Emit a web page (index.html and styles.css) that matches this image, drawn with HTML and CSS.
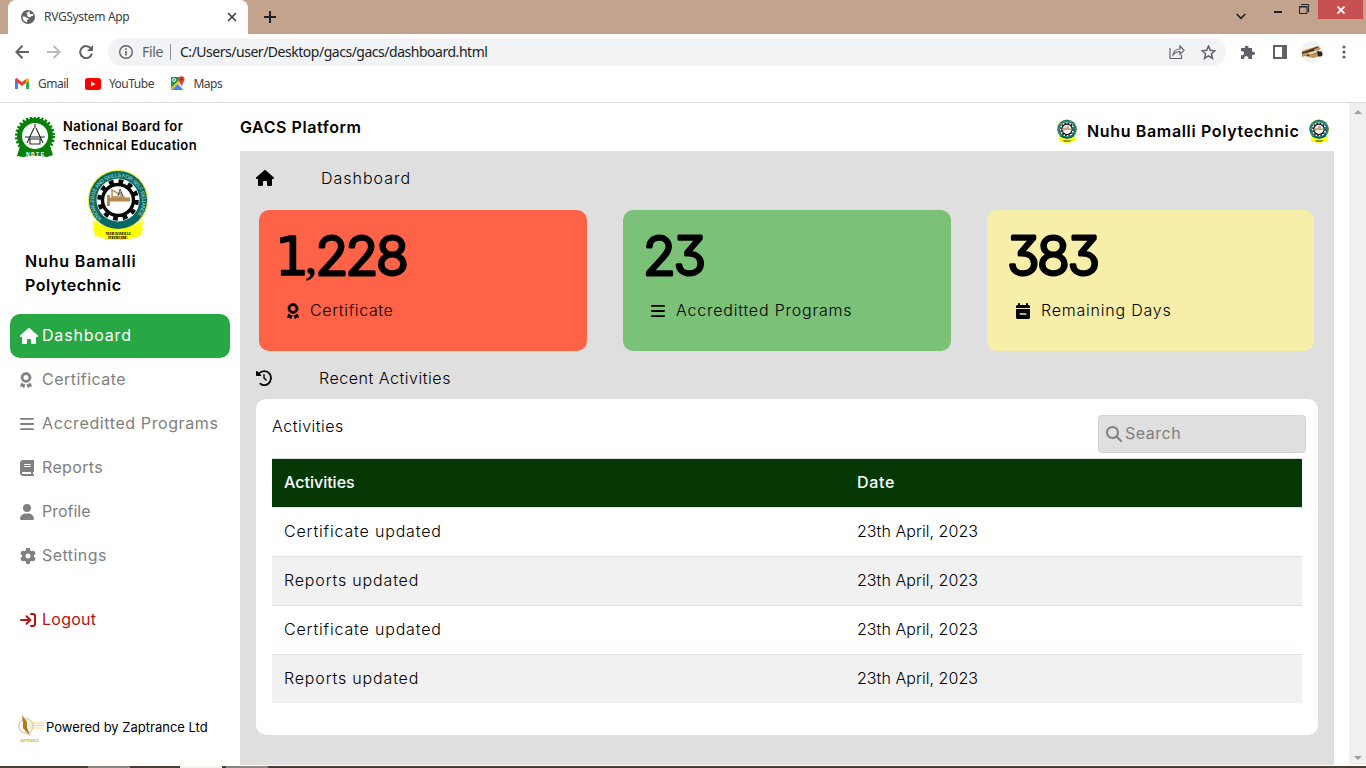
FILE: index.html
```html
<!DOCTYPE html>
<html lang="en">
<head>
<meta charset="utf-8">
<title>RVGSystem App</title>
<link rel="stylesheet" href="styles.css">
</head>
<body>
<svg class="sprite" aria-hidden="true">
  <symbol id="house" viewBox="0 0 576 512"><path d="M575.8 255.5c0 18-15 32.1-32 32.1h-32l.7 160.2c0 2.7-.2 5.4-.5 8.1V472c0 22.1-17.9 40-40 40H392c-22.1 0-40-17.9-40-40V384c0-17.7-14.3-32-32-32H256c-17.7 0-32 14.3-32 32v88c0 22.1-17.9 40-40 40H104c-22.1 0-40-17.9-40-40V287.6H32c-18 0-32-14-32-32.1c0-9 3-17 10-24L266.4 8c7-7 15-8 22-8s15 2 21 7L564.8 231.5c8 7 12 15 11 24z"/></symbol>
  <symbol id="award" viewBox="0 0 384 512"><g fill="none" stroke="currentColor"><circle cx="192" cy="176" r="120" stroke-width="78"/><circle cx="192" cy="176" r="162" stroke-width="28" stroke-dasharray="42 21.6"/></g><path d="M48 336L4 448c-4 12 5 22 17 21l52-2 37 39c8 9 22 7 27-5l41-104c-50-2-90-25-130-61zM336 336l44 112c4 12-5 22-17 21l-52-2-37 39c-8 9-22 7-27-5l-41-104c50-2 90-25 130-61z"/></symbol>
  <symbol id="bars" viewBox="0 0 448 512"><rect y="64" width="448" height="58" rx="26"/><rect y="227" width="448" height="58" rx="26"/><rect y="390" width="448" height="58" rx="26"/></symbol>
  <symbol id="book" viewBox="0 0 448 512"><path fill-rule="evenodd" d="M96 0C43 0 0 43 0 96V416c0 53 43 96 96 96H416c17.7 0 32-14.3 32-32s-14.3-32-32-32V384c17.7 0 32-14.3 32-32V32c0-17.7-14.3-32-32-32H96zm0 384H352v64H96c-17.7 0-32-14.3-32-32s14.3-32 32-32zm32-240c0-8.8 7.2-16 16-16H336c8.8 0 16 7.2 16 16s-7.2 16-16 16H144c-8.8 0-16-7.2-16-16zm16 48H336c8.8 0 16 7.2 16 16s-7.2 16-16 16H144c-8.8 0-16-7.2-16-16s7.2-16 16-16z"/></symbol>
  <symbol id="user" viewBox="0 0 448 512"><path d="M224 256A128 128 0 1 0 224 0a128 128 0 1 0 0 256zm-45.7 48C79.8 304 0 383.8 0 482.3C0 498.7 13.3 512 29.7 512H418.3c16.4 0 29.7-13.3 29.7-29.7C448 383.8 368.2 304 269.7 304H178.3z"/></symbol>
  <symbol id="gear" viewBox="0 0 512 512"><path d="M495.9 166.6c3.2 8.7 .5 18.4-6.4 24.6l-43.3 39.4c1.1 8.3 1.7 16.8 1.7 25.4s-.6 17.1-1.7 25.4l43.3 39.4c6.9 6.2 9.6 15.9 6.4 24.6c-4.4 11.9-9.7 23.3-15.8 34.3l-4.7 8.1c-6.6 11-14 21.4-22.1 31.2c-5.9 7.2-15.7 9.6-24.5 6.8l-55.7-17.7c-13.4 10.3-28.2 18.9-44 25.4l-12.5 57.1c-2 9.1-9 16.3-18.2 17.8c-13.8 2.3-28 3.5-42.5 3.5s-28.7-1.2-42.5-3.5c-9.2-1.5-16.2-8.7-18.2-17.8l-12.5-57.1c-15.8-6.5-30.6-15.1-44-25.4L83.1 425.9c-8.8 2.8-18.6 .3-24.5-6.8c-8.1-9.8-15.5-20.2-22.1-31.2l-4.7-8.1c-6.1-11-11.4-22.4-15.8-34.3c-3.2-8.7-.5-18.4 6.4-24.6l43.3-39.4C64.6 273.1 64 264.6 64 256s.6-17.1 1.7-25.4L22.4 191.2c-6.9-6.2-9.6-15.9-6.4-24.6c4.4-11.9 9.7-23.3 15.8-34.3l4.7-8.1c6.6-11 14-21.4 22.1-31.2c5.9-7.2 15.7-9.6 24.5-6.8l55.7 17.7c13.4-10.3 28.2-18.9 44-25.4l12.5-57.1c2-9.1 9-16.3 18.2-17.8C227.3 1.2 241.5 0 256 0s28.7 1.2 42.5 3.5c9.2 1.5 16.2 8.7 18.2 17.8l12.5 57.1c15.8 6.5 30.6 15.1 44 25.4l55.7-17.7c8.8-2.8 18.6-.3 24.5 6.8c8.1 9.8 15.5 20.2 22.1 31.2l4.7 8.1c6.1 11 11.4 22.4 15.8 34.3zM256 336a80 80 0 1 0 0-160 80 80 0 1 0 0 160z"/></symbol>
  <symbol id="login" viewBox="0 0 512 512"><path fill="none" stroke="currentColor" stroke-width="64" stroke-linecap="round" stroke-linejoin="round" d="M32 256H330M210 136L330 256L210 376M352 64h64c35 0 64 29 64 64v256c0 35-29 64-64 64h-64"/></symbol>
  <symbol id="history" viewBox="0 0 512 512"><path fill="none" stroke="currentColor" stroke-width="60" stroke-linecap="round" stroke-linejoin="round" d="M96 110C190 10 350 10 432 112C505 215 490 350 400 430C325 492 215 495 140 442"/><path d="M0 56c0-24 28-32 42-18l118 118c15 15 4 36-14 36H24c-13 0-24-11-24-24z"/><path fill="none" stroke="currentColor" stroke-width="46" stroke-linecap="round" stroke-linejoin="round" d="M256 152v104l66 66"/></symbol>
  <symbol id="calendar" viewBox="0 0 448 512"><path fill-rule="evenodd" d="M96 0c18 0 32 14 32 32v32h192V32c0-42 64-42 64 0v32h16c27 0 48 21 48 48v48H0v-48c0-27 21-48 48-48h16V32C64 14 78 0 96 0zM0 192h448v272c0 27-21 48-48 48H48c-27 0-48-21-48-48zm136 136c-34 0-34 48 0 48h176c34 0 34-48 0-48z"/></symbol>
  <symbol id="search" viewBox="0 0 512 512"><path d="M416 208c0 45.9-14.9 88.3-40 122.7L502.6 457.4c12.5 12.5 12.5 32.8 0 45.3s-32.8 12.5-45.3 0L330.7 376c-34.4 25.2-76.8 40-122.7 40C93.1 416 0 322.9 0 208S93.1 0 208 0S416 93.1 416 208zM208 352a144 144 0 1 0 0-288 144 144 0 1 0 0 288z"/></symbol>
</svg>

<div class="tabs">
  <div class="tab">
    <svg class="globe" viewBox="0 0 14 14"><circle cx="7" cy="7" r="7" fill="#5f6368"/><path d="M1.500 6.500l3 .2 1.300 1.200 1.700.1v1.200L6 10.300v2C3.200 12 1.500 9.500 1.500 6.500zM5 3.500l2.500-2 1.500.3-.5 1.700 1.500.8 2.200-.6v2l-1.800.4-1 1.200-2-.3-1.600-1.500L7 4.200z" fill="#fff"/></svg>
    <span class="tab-title">RVGSystem App</span>
    <svg class="close" viewBox="0 0 10 10"><path d="M1 1l8 8M9 1L1 9" stroke="#3c4043" stroke-width="1.700"/></svg>
  </div>
  <svg class="plus" viewBox="0 0 12 12"><path d="M6 0v12M0 6h12" stroke="#202124" stroke-width="2"/></svg>
  <div class="window-buttons">
    <svg class="chevron" viewBox="0 0 10 7"><path d="M.7 1L5 5.300 9.300 1" fill="none" stroke="#202124" stroke-width="1.700"/></svg>
    <span class="minimize"></span>
    <svg class="restore" viewBox="0 0 10 10"><path d="M2 .5h7.500V8M.5 2.500H8v7H.5zM0 3h8" fill="none" stroke="#202124"/></svg>
    <span class="exit"><svg width="8" height="8" viewBox="0 0 8 8"><path d="M.5.5l7 7M7.500.5l-7 7" stroke="#fff" stroke-width="1.800"/></svg></span>
  </div>
</div>
<div class="toolbar">
  <svg class="arrow" viewBox="0 0 14 14"><path d="M14 7H1.500M7.500.8L1.300 7l6.200 6.200" fill="none" stroke="#5f6368" stroke-width="2"/></svg>
  <svg class="arrow" viewBox="0 0 14 14"><path d="M0 7h12.500M6.500.8L12.700 7l-6.200 6.200" fill="none" stroke="#b7b9bc" stroke-width="1.800"/></svg>
  <svg class="reload" viewBox="0 0 14 14"><path d="M12.300 4A6 6 0 1 0 13 8.500" fill="none" stroke="#5f6368" stroke-width="2"/><path d="M14 0v6H8z" fill="#5f6368"/></svg>
  <div class="address">
    <svg class="info" viewBox="0 0 14 14"><circle cx="7" cy="7" r="6.300" fill="none" stroke="#5f6368" stroke-width="1.400"/><path d="M7 6v4.500M7 3.300V5" stroke="#5f6368" stroke-width="1.600"/></svg>
    <span class="scheme">File</span><span class="rule"></span><span class="url">C:/Users/user/Desktop/gacs/gacs/dashboard.html</span>
    <svg class="share" viewBox="0 0 16 16"><path d="M1 4v10.500h11.500V11M4 11c.5-4 3-6 7-6V2l4 4.300-4 4V7.500C8 7.300 6 8.500 4 11z" fill="none" stroke="#5f6368" stroke-width="1.200"/></svg>
    <svg class="star" viewBox="0 0 14 14"><path d="M7 1l1.700 4 4.300.4-3.300 2.800 1 4.300L7 10.200 3.300 12.500l1-4.300L1 5.400 5.300 5z" fill="none" stroke="#5f6368" stroke-width="1.400"/></svg>
  </div>
  <svg class="puzzle" viewBox="0 0 15 15"><path d="M1 3h4C4 0 9 0 8.500 3H12v3.500c4-.5 4 4 0 3.500V14H8.500c0-4-4.500-4-4.500 0H1v-3.700c4 0 4-4.300 0-4.300z" fill="#5f6368"/></svg>
  <svg class="panel" viewBox="0 0 14 14"><path d="M1 1h12v12H1z" fill="none" stroke="#5f6368" stroke-width="2"/><path d="M9 1h4v12H9z" fill="#5f6368"/></svg>
  <svg class="avatar" viewBox="0 0 22 22"><circle cx="11" cy="11" r="11" fill="#f2f2f1"/><path d="M1 10l16-5 3 3-7 3 8-1-1 5-8 2-8-2-3 1z" fill="#bd935b"/><path d="M1 12l12-3M6 15l8-5 4 1M4 11l13-5" stroke="#45321f" stroke-width="1.300"/><path d="M8 13l8-3" stroke="#f3dab0" stroke-width="2"/><circle cx="19" cy="13" r="2.500" fill="#222528"/></svg>
  <svg class="menu" viewBox="0 0 4 14"><g fill="#5f6368"><circle cx="2" cy="2" r="1.600"/><circle cx="2" cy="7" r="1.600"/><circle cx="2" cy="12" r="1.600"/></g></svg>
</div>
<div class="bookmarks">
  <svg class="gmail" viewBox="0 0 14 11"><path d="M0 1v10h3V4z" fill="#4285f4"/><path d="M14 1v10h-3V4z" fill="#34a853"/><path d="M0 1.500L1.500 0 7 4l4-3v4L7 8 0 3z" fill="#ea4335"/><path d="M11 1c1.500-1.500 3-.5 3 1v1l-3 2z" fill="#fbbc04"/></svg><span>Gmail</span>
  <svg class="youtube" viewBox="0 0 16 12"><rect width="16" height="12" rx="2.500" fill="#f00"/><path d="M6 3.500v5L10.500 6z" fill="#fff"/></svg><span>YouTube</span>
  <svg class="maps" viewBox="0 0 15 15"><path d="M1 1h12v13H1z" fill="#e5e5e5"/><path d="M1 1h8v5L1 13z" fill="#1a9c55"/><path d="M1 13l6-6 6 7H1z" fill="#4285f4"/><path d="M1 12L9 4l1 2-8 8z" fill="#fbc52d"/><circle cx="4" cy="4" r="1.500" fill="none" stroke="#fff"/><path d="M11.500 10C10.500 7 8.500 5.500 8.500 3.200a3 3 0 0 1 6 0c0 2.300-2 3.800-3 6.800z" fill="#de4032"/><circle cx="11.500" cy="3.200" r="1" fill="#842020"/></svg><span>Maps</span>
</div>

<div class="page">
  <aside>
    <div class="board">
      <svg class="nbte" viewBox="0 0 40 41"><circle cx="20" cy="19" r="15.500" fill="#fff" stroke="#098009" stroke-width="5"/><circle cx="20" cy="19" r="18.500" fill="none" stroke="#098009" stroke-width="3" stroke-dasharray="2.200 1.675"/><path d="M5 29l4 3c7 3 15 3 22 0l4-3 3 9-6 2c-8-2-16-2-24 0l-6-1z" fill="#098009"/><path d="M20 7v4M19 11l-7 15M21 11l7 15M10 20h20M15 22h10v5H15z" fill="none" stroke="#252525" stroke-width="1.100"/><text class="nbte-text" x="20.700" y="38.500" text-anchor="middle" fill="#fff">NBTE</text></svg>
      <div class="board-name"><span>National Board for</span><br><span>Technical Education</span></div>
    </div>
    <svg class="school-seal" viewBox="0 0 60 70"><g id="seal">
      <circle cx="30" cy="30" r="30" fill="#e6ee20"/><circle cx="30" cy="30" r="29" fill="#066864"/>
      <circle cx="30" cy="30" r="21.500" fill="#fff"/>
      <circle cx="30" cy="30" r="18.800" fill="none" stroke="#080808" stroke-width="4" stroke-dasharray="4.800 5.043"/>
      <circle cx="30" cy="30" r="15.500" fill="#fff" stroke="#080808" stroke-width="3.400"/>
      <path id="sealArc" d="M13.500 48.500A24 24 0 1 1 46.500 48.500" fill="none"/>
      <text class="seal-text" fill="#b9dfdc"><textPath href="#sealArc" textLength="109">KNOWLEDGE AND SKILLS FOR SELF RELIANCE</textPath></text>
      <path d="M24 20v7h12z" fill="#fff" stroke="#b48a52" stroke-width="1.400"/><path d="M19 25h3v2.500h20v4H22V36h-3z" fill="#b48a52"/><path d="M30 26l2-7 3 7M31 23h3" fill="none" stroke="#222" stroke-width=".8"/>
      <path d="M5 50c15 12 35 12 50 0l-1 8 2 2-3 1 1 4c-16 7-32 7-48 0l1-4-3-1 2-2z" fill="#ffff00"/>
      <text class="seal-name" x="30" y="65" text-anchor="middle" textLength="25">NUHU BAMALLI</text><text class="seal-name" x="30" y="69" text-anchor="middle" textLength="20">POLYTECHNIC</text>
    </g></svg>
    <div class="school"><span class="nuhu">Nuhu Bamalli</span><br><span class="poly">Polytechnic</span></div>
    <nav>
      <div class="item active"><svg class="w18"><use href="#house"/></svg><span class="dash">Dashboard</span></div>
      <div class="item"><svg class="w12"><use href="#award"/></svg><span class="cert">Certificate</span></div>
      <div class="item"><svg class="w14"><use href="#bars"/></svg><span class="accr">Accreditted Programs</span></div>
      <div class="item"><svg class="w14"><use href="#book"/></svg><span class="rep">Reports</span></div>
      <div class="item"><svg class="w14"><use href="#user"/></svg><span class="prof">Profile</span></div>
      <div class="item"><svg class="w16"><use href="#gear"/></svg><span class="sett">Settings</span></div>
      <div class="item logout"><svg class="w16"><use href="#login"/></svg><span class="logo">Logout</span></div>
    </nav>
    <footer><svg class="zap" viewBox="0 0 28 30"><circle cx="8" cy="11" r="7.300" fill="none" stroke="#d9b98c" stroke-width="1"/><path d="M4 0l5 7v5l3 9-7-8V8z" fill="#b97812"/><path d="M11 8h15M11 10.500h15M11 13h14" stroke="#ead775"/><text class="zap-text" x="2" y="27" fill="#c9b350">ZAPTRANCE</text></svg><span>Powered by Zaptrance Ltd</span></footer>
  </aside>
  <main>
    <header><h1>GACS Platform</h1><div class="who"><svg viewBox="0 0 60 70"><use href="#seal"/></svg><b>Nuhu Bamalli Polytechnic</b><svg viewBox="0 0 60 70"><use href="#seal"/></svg></div></header>
    <section class="content">
      <div class="heading first"><svg class="w18"><use href="#house"/></svg><span class="dash">Dashboard</span></div>
      <div class="cards">
        <div class="card red"><svg class="number"><text class="one" x="-5" y="54.500">1</text><text class="comma" x="25.500" y="54">,</text><text x="35.500 65.500 96" y="54.500">228</text></svg><div class="label"><svg class="w12"><use href="#award"/></svg><span class="cert">Certificate</span></div></div>
        <div class="card green"><svg class="number"><text x="-1 29.500" y="54.500">23</text></svg><div class="label"><svg class="w14"><use href="#bars"/></svg><span class="accr">Accreditted Programs</span></div></div>
        <div class="card yellow"><svg class="number"><text x="-1 29 59.500" y="54.500">383</text></svg><div class="label"><svg class="w14"><use href="#calendar"/></svg><span class="rem">Remaining Days</span></div></div>
      </div>
      <div class="heading recent"><svg class="w16"><use href="#history"/></svg><span class="ract">Recent Activities</span></div>
      <div class="activity">
        <div class="activity-head"><span class="act">Activities</span><div class="search"><svg class="w16"><use href="#search"/></svg><span>Search</span></div></div>
        <table>
          <thead><tr><th>Activities</th><th>Date</th></tr></thead>
          <tbody>
            <tr><td class="upd">Certificate updated</td><td>23th April, 2023</td></tr>
            <tr><td class="upd">Reports updated</td><td>23th April, 2023</td></tr>
            <tr><td class="upd">Certificate updated</td><td>23th April, 2023</td></tr>
            <tr><td class="upd">Reports updated</td><td>23th April, 2023</td></tr>
          </tbody>
        </table>
      </div>
    </section>
  </main>
  <div class="scrollbar"><i class="up"></i><i class="down"></i></div>
</div>
<div class="taskbar"><i class="t1"></i><i class="t2"></i><i class="t3"></i></div>
</body>
</html>
```
FILE: styles.css
```css
* { box-sizing: border-box; }
body { margin: 0; width: 1366px; height: 768px; overflow: hidden; background: #fff; color: #000; font: 300 16px/24px Inter, sans-serif; }
svg { display: block; flex: none; fill: currentColor; }
span, b, td, th { white-space: nowrap; }
.sprite { position: absolute; width: 0; height: 0; }
.tabs { height: 34px; background: #c3a28e; display: flex; }
.tab { margin-left: 8px; width: 240px; background: #fff; border-radius: 8px 8px 0 0; display: flex; align-items: center; padding: 0 11px 0 13px; }
.globe { width: 14px; height: 14px; }
.tab-title { margin-left: 9px; font: 12px/16px "Noto Sans", sans-serif; letter-spacing: -.33px; color: #3c4043; flex: 1; }
.close { width: 10px; height: 10px; }
.plus { width: 12px; height: 12px; margin: 11px 0 0 16px; }
.window-buttons { margin-left: auto; display: flex; padding-right: 3px; }
.chevron { width: 10px; height: 7px; margin: 13px 28px 0 0; }
.minimize { width: 8px; height: 2px; background: #202124; margin: 11px 17px 0 0; }
.restore { width: 10px; height: 10px; margin: 4px 9px 0 0; }
.exit { width: 45px; height: 19px; background: #c75050; display: flex; align-items: center; justify-content: center; }
.toolbar { height: 36px; display: flex; align-items: center; padding-left: 15px; color: #5f6368; }
.arrow { width: 14px; height: 14px; margin-right: 18px; }
.reload { width: 14px; height: 14px; margin-right: 15px; }
.address { width: 1118px; height: 28px; border-radius: 14px; background: #f1f3f4; display: flex; align-items: center; font: 14px/20px "Noto Sans", sans-serif; padding: 0 10px 0 11px; }
.info { width: 14px; height: 14px; margin-right: 9px; }
.scheme { width: 28px; letter-spacing: -.35px; }
.rule { width: 1px; height: 16px; background: #8d9093; margin-right: 9px; }
.url { color: #202124; letter-spacing: -.48px; flex: 1; }
.share { width: 16px; height: 16px; margin-right: 16px; }
.star { width: 15px; height: 15px; }
.puzzle { width: 15px; height: 15px; margin-left: 14px; }
.panel { width: 14px; height: 14px; margin-left: 18px; }
.avatar { width: 22px; height: 22px; margin-left: 14px; }
.menu { width: 4px; height: 14px; margin-left: 19px; }
.bookmarks { height: 33px; border-bottom: 1px solid #dadce0; display: flex; align-items: center; padding: 0 0 5px 15px; font: 12px/16px "Noto Sans", sans-serif; color: #3c4043; letter-spacing: -.5px; }
.gmail { width: 14px; height: 11px; margin-right: 9px; }
.youtube { width: 16px; height: 12px; margin: 0 8px 0 16.5px; }
.maps { width: 15px; height: 15px; margin: 0 8px 0 16.5px; }
.page { height: 662px; display: flex; }
aside { width: 240px; }
.board { display: flex; height: 67px; padding: 14px 0 0 15px; }
.nbte { width: 40px; height: 41px; margin-right: 8px; }
.nbte-text { font: bold 5px "Liberation Sans", sans-serif; letter-spacing: 1.5px; }
.board-name { font-size: 13px; font-weight: 600; line-height: 19px; letter-spacing: .37px; }
.school-seal { width: 60px; height: 70px; margin-left: 88px; }
.seal-text { font: 5.300px "Liberation Sans", sans-serif; }
.seal-name { font: bold 4px "Liberation Serif", serif; }
.school { font-weight: 600; margin: 9px 0 0 25px; height: 65px; }
.nuhu { letter-spacing: .85px; }
.poly { letter-spacing: .47px; }
.item { height: 44px; margin: 0 10px; padding-left: 10px; border-radius: 10px; display: flex; align-items: center; color: gray; font-weight: 400; }
.item svg { margin-right: auto; }
.item span { width: 188px; margin-bottom: 2px; }
.item .dash { letter-spacing: .8px; }
.item .cert { letter-spacing: .47px; }
.item .accr { letter-spacing: .6px; }
.rep { letter-spacing: .35px; }
.sett { letter-spacing: .45px; }
.logo { letter-spacing: .25px; }
.dash { letter-spacing: 1px; }
.cert { letter-spacing: .64px; }
.accr { letter-spacing: .79px; }
.rem { letter-spacing: .78px; }
.ract { letter-spacing: .53px; }
.act { letter-spacing: .5px; }
.active { color: #fff; background: #28a745; }
.logout { margin-top: 20px; color: #b11; }
.w12 { width: 12px; height: 16px; }
.w14 { width: 14px; height: 16px; }
.w16 { width: 16px; height: 16px; }
.w18 { width: 18px; height: 16px; }
footer { display: flex; align-items: center; margin: 68px 0 0 18px; font-size: 13px; font-weight: 400; height: 34px; letter-spacing: 0; }
.zap { width: 28px; height: 30px; margin-top: 6px; }
.zap-text { font: bold 3px "Liberation Sans", sans-serif; }
main { width: 1094px; margin-right: 15px; }
header { height: 48px; display: flex; justify-content: space-between; }
h1 { font-size: 16px; line-height: 24px; font-weight: 600; margin: 12px 0 0; letter-spacing: .57px; }
.who { display: flex; align-items: center; padding: 7px 5px 0 0; }
.who b { width: 212px; margin: 0 10px; font-weight: 600; letter-spacing: .65px; }
.who svg { width: 20px; height: 24px; }
.content { height: 614px; background: #dfdfdf; padding: 0 16px; }
.heading { display: flex; align-items: center; }
.first { height: 59px; padding-bottom: 5px; }
.first span { margin-left: 47px; }
.cards { display: grid; grid-template-columns: 328px 328px 327px; column-gap: 36px; padding-left: 3px; }
.card { height: 141px; border-radius: 10px; padding: 10px 21px; }
.red { background: #ff6347; }
.green { background: #7cc178; }
.yellow { background: #f7eeaa; }
.number { width: 140px; height: 72px; overflow: visible; font: 300 53.500px Inter, sans-serif; font-feature-settings: "cv09"; stroke: #000; stroke-width: 3px; stroke-linejoin: round; }
.one { font-family: "DejaVu Sans", sans-serif; font-weight: 400; stroke-width: 1.500px; }
.comma { font: bold 42px "Liberation Serif", serif; stroke-width: 0; }
.label { display: flex; align-items: center; gap: 11px; padding-left: 7px; height: 38px; }
.label span { margin-bottom: 2px; }
.yellow .label { padding-left: 7.5px; gap: 11.5px; }
.recent { height: 48px; padding-top: 6px; }
.recent span { margin-left: 47px; }
.activity { background: #fff; border-radius: 10px; height: 336px; padding: 16px 16px 0; }
.activity-head { height: 43px; display: flex; justify-content: space-between; margin-right: -4px; }
.act { margin-top: -1px; }
.search { width: 208px; height: 38px; border: 1px solid #ced4da; border-radius: 4px; background: #dfdfdf; color: #808080; display: flex; align-items: center; padding-left: 7px; gap: 3px; font-weight: 400; letter-spacing: .5px; }
.search span { margin-bottom: 2px; }
table { width: 1030px; border-collapse: separate; border-spacing: 0; table-layout: fixed; border-top: 1px solid #dee2e6; }
th, td { text-align: left; padding: 11px 12px 13px; height: 49px; border-bottom: 1px solid #dee2e6; }
th { background: #063806; color: #fff; font-weight: 500; width: 573px; }
th + th { width: 457px; letter-spacing: .7px; }
td { letter-spacing: .05px; }
.upd { letter-spacing: .83px; }
tbody tr:nth-child(even) { background: #f1f1f1; }
tbody tr:last-child td { border-bottom: 0; height: 48px; }
.scrollbar { width: 17px; background: #f0f0f0; display: flex; flex-direction: column; justify-content: space-between; align-items: center; padding: 7px 0 5px; }
.up, .down { border: 4px solid transparent; }
.up { border-top: 0; border-bottom-color: #a0a0a0; }
.down { border-bottom: 0; border-top-color: #a0a0a0; }
.taskbar { height: 2px; margin-top: 1px; background: #493d35; display: flex; }
.t1 { margin-left: 88px; width: 42px; background: #8d857e; }
.t2 { margin-left: 50px; width: 42px; background: #f2f2ea; }
.t3 { margin-left: 4px; width: 42px; background: #8d857e; }
```
